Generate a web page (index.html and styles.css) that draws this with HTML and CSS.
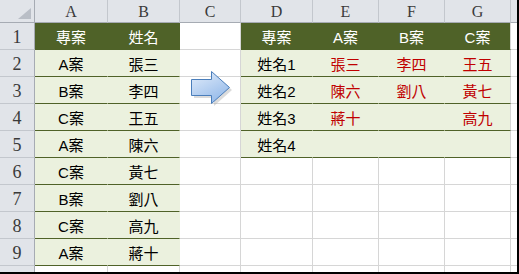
FILE: index.html
```html
<!DOCTYPE html>
<html>
<head>
<meta charset="utf-8">
<link rel="stylesheet" href="styles.css">
</head>
<body>
<div class="sheet">
  <div class="c ch corner"><svg width="13" height="11" viewBox="0 0 13 11"><polygon points="13,0 13,11 0,11" fill="#b9bec6"/></svg></div>
  <div class="c ch">A</div><div class="c ch">B</div><div class="c ch">C</div><div class="c ch">D</div><div class="c ch">E</div><div class="c ch">F</div><div class="c ch">G</div><div class="c ch edge"></div>

  <div class="c rh">1</div>
  <div class="c th">專案</div><div class="c th">姓名</div><div class="c"></div>
  <div class="c th">專案</div><div class="c th">A案</div><div class="c th">B案</div><div class="c th last">C案</div><div class="c edge"></div>

  <div class="c rh">2</div>
  <div class="c td">A案</div><div class="c td">張三</div><div class="c"></div>
  <div class="c td">姓名1</div><div class="c td red">張三</div><div class="c td red">李四</div><div class="c td last red">王五</div><div class="c edge"></div>

  <div class="c rh">3</div>
  <div class="c td">B案</div><div class="c td">李四</div><div class="c"></div>
  <div class="c td">姓名2</div><div class="c td red">陳六</div><div class="c td red">劉八</div><div class="c td last red">黃七</div><div class="c edge"></div>

  <div class="c rh">4</div>
  <div class="c td">C案</div><div class="c td">王五</div><div class="c"></div>
  <div class="c td">姓名3</div><div class="c td red">蔣十</div><div class="c td"></div><div class="c td last red">高九</div><div class="c edge"></div>

  <div class="c rh">5</div>
  <div class="c td">A案</div><div class="c td">陳六</div><div class="c"></div>
  <div class="c td">姓名4</div><div class="c td"></div><div class="c td"></div><div class="c td last"></div><div class="c edge"></div>

  <div class="c rh">6</div>
  <div class="c td">C案</div><div class="c td">黃七</div><div class="c"></div>
  <div class="c"></div><div class="c"></div><div class="c"></div><div class="c"></div><div class="c edge"></div>

  <div class="c rh">7</div>
  <div class="c td">B案</div><div class="c td">劉八</div><div class="c"></div>
  <div class="c"></div><div class="c"></div><div class="c"></div><div class="c"></div><div class="c edge"></div>

  <div class="c rh">8</div>
  <div class="c td">C案</div><div class="c td">高九</div><div class="c"></div>
  <div class="c"></div><div class="c"></div><div class="c"></div><div class="c"></div><div class="c edge"></div>

  <div class="c rh">9</div>
  <div class="c td">A案</div><div class="c td">蔣十</div><div class="c"></div>
  <div class="c"></div><div class="c"></div><div class="c"></div><div class="c"></div><div class="c edge"></div>

  <div class="c rh bottom"></div>
  <div class="c bottom"></div><div class="c bottom"></div><div class="c bottom"></div><div class="c bottom"></div><div class="c bottom"></div><div class="c bottom"></div><div class="c bottom"></div><div class="c bottom edge"></div>

  <svg class="arrow" width="44" height="38" viewBox="0 0 44 38">
    <defs>
      <linearGradient id="g" x1="0" y1="0" x2="0.6" y2="1">
        <stop offset="0" stop-color="#e3edfa"/>
        <stop offset="1" stop-color="#96bbea"/>
      </linearGradient>
    </defs>
    <polygon points="2.5,10.5 22.5,10.5 22.5,2.5 40.5,18.5 22.5,34.5 22.5,26.5 2.5,26.5" fill="#b0b0b0" opacity="0.45" transform="translate(1.5,1.5)"/>
    <polygon points="1.5,9.5 21.5,9.5 21.5,1.5 39.5,17.5 21.5,33.5 21.5,25.5 1.5,25.5" fill="url(#g)" stroke="#4a7ebb" stroke-width="1"/>
  </svg>
</div>
</body>
</html>
```

FILE: styles.css
```css
html, body {
  margin: 0;
  padding: 0;
  background: #ffffff;
}

.sheet {
  position: relative;
  display: grid;
  grid-template-columns: 35px 73px 72px 61px 72px 66px 66px 66px 6px;
  grid-template-rows: 23px repeat(9, 27px) 6px;
  width: 517px;
  border-right: 2px solid #000000;
  border-bottom: 2px solid #000000;
  font-family: "Liberation Sans", "Noto Sans CJK TC", sans-serif;
  font-size: 15px;
  color: #000000;
}

.c {
  box-sizing: border-box;
  border-right: 1px solid #d6d6d6;
  border-bottom: 1px solid #d6d6d6;
  display: flex;
  align-items: center;
  justify-content: center;
  overflow: hidden;
  white-space: nowrap;
}

.ch {
  background: #e1e4e9;
  border-right-color: #c3c7cd;
  border-bottom-color: #a6abb3;
  font-family: "Liberation Serif", serif;
  font-size: 16px;
  color: #3a3a3a;
  padding-top: 1px;
}

.corner {
  justify-content: flex-end;
  align-items: flex-end;
  padding: 0 3px 3px 0;
  border-right-color: #a6abb3;
}

.rh {
  background: #e1e4e9;
  border-right-color: #a6abb3;
  border-bottom-color: #c3c7cd;
  font-family: "Liberation Serif", serif;
  font-size: 18px;
  color: #3a3a3a;
  align-items: flex-end;
  padding-bottom: 1px;
}

.th {
  background: #4f6228;
  border-right-color: #4f6228;
  border-bottom-color: #4f6228;
  color: #ffffff;
}

.td {
  background: #ebf1de;
  border-right-color: #ebf1de;
  border-bottom-color: #4f6228;
}

.last {
  border-right-color: #d6d6d6;
}

.red {
  color: #c00000;
}

.edge {
  border-right: none;
}

.bottom {
  border-bottom: none;
}

.arrow {
  position: absolute;
  left: 190px;
  top: 70px;
}
```
